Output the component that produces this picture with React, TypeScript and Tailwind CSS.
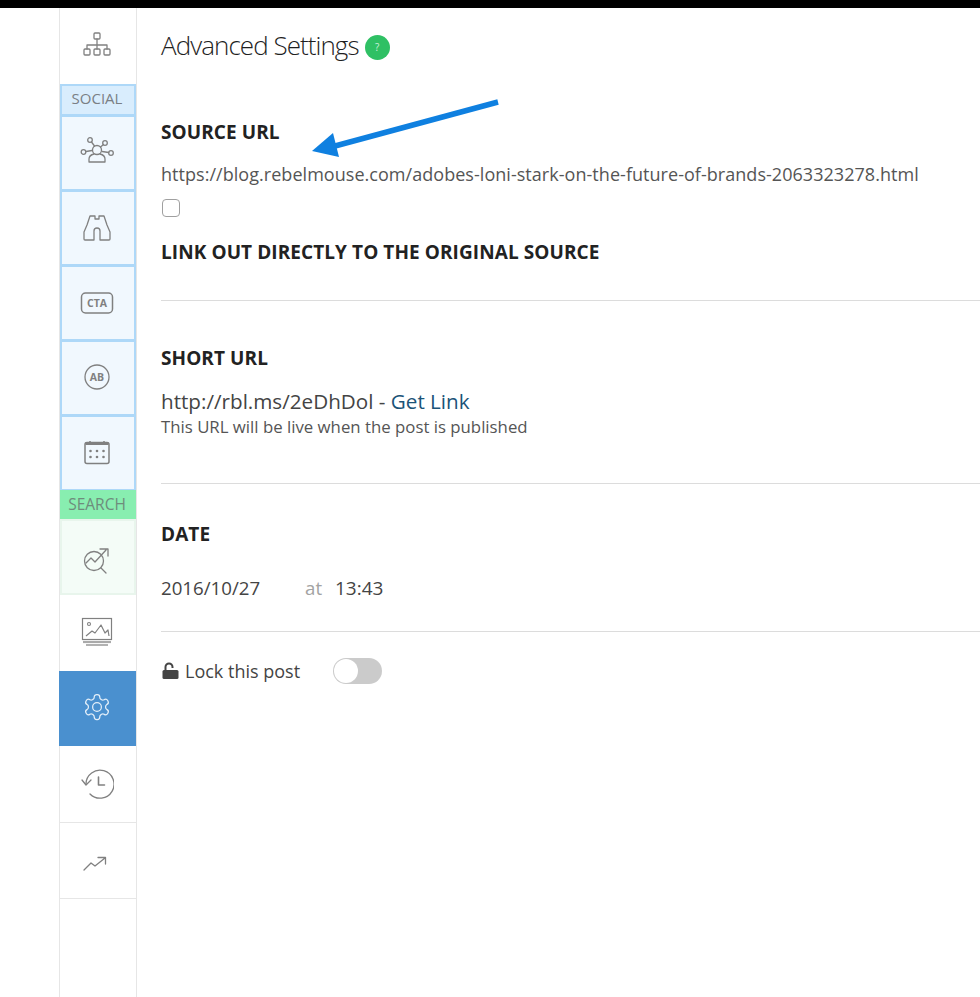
import type { ReactNode } from "react";

const stroke = "#808080";

function Ico({ children }: { children: ReactNode }) {
  return (
    <svg width="34" height="34" viewBox="0 0 34 34" fill="none" stroke={stroke} strokeWidth="1.3" strokeLinecap="round" strokeLinejoin="round">
      {children}
    </svg>
  );
}

function Cell({ className, children }: { className: string; children: ReactNode }) {
  return <div className={`flex items-center justify-center ${className}`}>{children}</div>;
}

const socialCell = "h-[76px] border-2 border-[#aed8f8] bg-[#f1f8fe] -mt-px";
const calendarDots = [7.5, 14, 20.5].flatMap((x) => [12, 18].map((y) => ({ x, y })));

export default function App() {
  return (
    <div className="flex h-[997px] w-[980px] flex-col overflow-hidden bg-white font-['Open_Sans',sans-serif] text-[#333]">
      <div className="h-2 shrink-0 bg-black" />
      <div className="relative flex flex-1 pl-[59px]">
        {/* left rail */}
        <div className="w-[78px] shrink-0 border-x border-[#e6e6e6]">
          <Cell className="h-[76px] pb-[3px] pr-[3px]">
            <Ico>
              <rect x="14" y="5" width="6" height="6" rx="1" />
              <path d="M17 11v6M7 21v-4h20v4M17 17v4" />
              <rect x="4" y="21" width="6" height="6" rx="1" />
              <rect x="14" y="21" width="6" height="6" rx="1" />
              <rect x="24" y="21" width="6" height="6" rx="1" />
            </Ico>
          </Cell>
          <div className="flex h-[32px] items-center justify-center border-2 border-[#aed8f8] bg-[#d9edfd] pb-[3px] pr-[2px] text-[15px] text-[#7a7f85]">
            SOCIAL
          </div>
          <Cell className={`${socialCell} pb-[4px] pr-[3px]`}>
            <Ico>
              <circle cx="17" cy="16" r="4.5" />
              <path d="M9 28v-3c0-3 3-4.500 5-5M25 28v-3c0-3-3-4.500-5-5M9 28h16" />
              <circle cx="10" cy="6" r="2.300" />
              <circle cx="25" cy="9" r="2.300" />
              <circle cx="3.500" cy="18" r="2.300" />
              <circle cx="31" cy="19" r="2.300" />
              <path d="M11.500 8l3 4M23.500 10.500l-3 2.500M6 17.500l6-1M28.700 18.500l-6.500-1" />
            </Ico>
          </Cell>
          <Cell className={`${socialCell} pr-[3px]`}>
            <Ico>
              <path d="M10 5h5v3h4V5h5l3 9 3 7v7a1 1 0 0 1-1 1h-9v-9c0-2-1-3-3-3s-3 1-3 3v9H5a1 1 0 0 1-1-1v-7l3-7z" />
            </Ico>
          </Cell>
          <Cell className={`${socialCell} pr-[3px]`}>
            <svg width="34" height="24" viewBox="0 0 34 24" fill="none">
              <rect x="1.500" y="2" width="31" height="20" rx="4" stroke={stroke} strokeWidth="1.500" />
              <text x="17" y="16" textAnchor="middle" fontFamily="Open Sans, sans-serif" fontWeight="700" fontSize="10.500" fill={stroke}>CTA</text>
            </svg>
          </Cell>
          <Cell className={`${socialCell} pb-[2px] pr-[3px]`}>
            <svg width="28" height="28" viewBox="0 0 28 28" fill="none">
              <circle cx="14" cy="14" r="12" stroke={stroke} strokeWidth="1.300" />
              <text x="14" y="18" textAnchor="middle" fontFamily="Open Sans, sans-serif" fontWeight="700" fontSize="10.500" fill={stroke}>AB</text>
            </svg>
          </Cell>
          <Cell className={`${socialCell} pb-[2px] pr-[3px]`}>
            <svg width="28" height="26" viewBox="0 0 28 26" fill="none" stroke={stroke}>
              <rect x="2" y="3.500" width="24" height="21" rx="2" strokeWidth="1.500" />
              <path d="M2.500 4.500h23" strokeWidth="3" />
              <path d="M7 2v3M21 2v3" strokeWidth="1.500" />
              {calendarDots.map((d) => (
                <circle key={`${d.x}-${d.y}`} cx={d.x} cy={d.y} r="1.300" fill={stroke} stroke="none" />
              ))}
            </svg>
          </Cell>
          <div className="-mt-px flex h-[29px] items-center justify-center bg-[#88eeb0] pr-[2px] text-[15.5px] text-[#6e8c7c]">SEARCH</div>
          <Cell className="h-[76px] border-2 border-[#e8f5ec] bg-[#f4fcf7] pt-[5px] pr-[3px]">
            <Ico>
              <circle cx="14" cy="18" r="9.500" />
              <path d="M6 20l5-5 4 4 11-12M20 6h8v7M21 25l5 5" />
            </Ico>
          </Cell>
          <Cell className="h-[76px] pb-[3px] pr-[3px]">
            <svg width="34" height="34" viewBox="0 0 34 34" fill="none" stroke={stroke}>
              <rect x="2.500" y="3.500" width="29" height="21" strokeWidth="1.200" />
              <circle cx="9" cy="9" r="1.500" strokeWidth="1.100" />
              <path d="M6 21l6-5 3 2 6-8 4 8 3-3 1 6" strokeWidth="1.200" strokeLinejoin="round" />
              <path d="M3 27h28" strokeWidth="2.200" stroke="#aaa" />
              <path d="M6 30h22" strokeWidth="1.800" stroke="#aaa" />
            </svg>
          </Cell>
          <Cell className="-ml-px h-[75px] bg-[#4a90cf] pb-[3px] pr-[2px]">
            <svg width="30" height="30" viewBox="0 0 24 24" fill="none" stroke="#e4eff9" strokeWidth="1" strokeLinecap="round" strokeLinejoin="round">
              <path d="M12.220 2h-.440a2 2 0 0 0-2 2v.180a2 2 0 0 1-1 1.730l-.430.250a2 2 0 0 1-2 0l-.150-.080a2 2 0 0 0-2.730.730l-.220.380a2 2 0 0 0 .730 2.730l.150.100a2 2 0 0 1 1 1.720v.510a2 2 0 0 1-1 1.740l-.150.090a2 2 0 0 0-.730 2.730l.220.380a2 2 0 0 0 2.730.730l.150-.080a2 2 0 0 1 2 0l.430.250a2 2 0 0 1 1 1.730V20a2 2 0 0 0 2 2h.440a2 2 0 0 0 2-2v-.180a2 2 0 0 1 1-1.730l.430-.250a2 2 0 0 1 2 0l.150.080a2 2 0 0 0 2.730-.730l.220-.390a2 2 0 0 0-.730-2.730l-.150-.080a2 2 0 0 1-1-1.740v-.500a2 2 0 0 1 1-1.740l.150-.090a2 2 0 0 0 .730-2.730l-.220-.380a2 2 0 0 0-2.730-.730l-.150.080a2 2 0 0 1-2 0l-.430-.250a2 2 0 0 1-1-1.730V4a2 2 0 0 0-2-2z" />
              <circle cx="12" cy="12" r="3.500" />
            </svg>
          </Cell>
          <Cell className="h-[77px] border-b border-[#e6e6e6] pr-[3px]">
            <Ico>
              <path d="M6 17a14 14 0 1 1 4 10" />
              <path d="M2 13l4 5 5-5" />
              <path d="M18.500 10v8h6" strokeWidth="1.600" />
            </Ico>
          </Cell>
          <Cell className="h-[76px] border-b border-[#e6e6e6] pt-[6px] pr-[6px]">
            <svg width="26" height="16" viewBox="0 0 26 16" fill="none" stroke={stroke} strokeWidth="1.300" strokeLinecap="round" strokeLinejoin="round">
              <path d="M2 14l7-7 4 3 10-8M16 1.500h7.500V8" />
            </svg>
          </Cell>
        </div>

        {/* settings */}
        <div className="min-w-0 flex-1 pl-6">
          <div className="mt-[18px] flex items-center">
            <h1 className="whitespace-nowrap text-[26px] leading-[38px] font-light tracking-[-0.95px] text-[#1f1f1f]">Advanced Settings</h1>
            <span className="ml-[6px] mt-1 flex h-[25px] w-[25px] items-center justify-center rounded-full bg-[#2fc064] text-[10px] text-[#cdeeda]">?</span>
          </div>

          <h2 className="mt-[56px] text-[19px] leading-6 font-bold tracking-[0.08px] text-[#222]">SOURCE URL</h2>
          <p className="mt-[18px] whitespace-nowrap text-[18px] leading-6 tracking-[0.04px] text-[#555]">
            https://blog.rebelmouse.com/adobes-loni-stark-on-the-future-of-brands-2063323278.html
          </p>
          <div className="mt-[13px] ml-px h-[18px] w-[18px] rounded-[4px] border border-[#a0a0a0] bg-white" />
          <h2 className="mt-[23px] whitespace-nowrap text-[19px] leading-6 font-bold tracking-[0.08px] text-[#222]">LINK OUT DIRECTLY TO THE ORIGINAL SOURCE</h2>

          <div className="mt-[36px] border-t border-[#dcdcdc] pt-[45px]">
            <h2 className="text-[19px] leading-6 font-bold tracking-[0.08px] text-[#222]">SHORT URL</h2>
            <p className="mt-[19px] text-[20.650px] leading-6 text-[#444]">
              http://rbl.ms/2eDhDol - <span className="text-[#1b5378]">Get Link</span>
            </p>
            <p className="mt-[4px] text-[16.800px] leading-5 text-[#555]">This URL will be live when the post is published</p>
          </div>

          <div className="mt-[46px] border-t border-[#dcdcdc] pt-[38px]">
            <h2 className="text-[19px] leading-6 font-bold tracking-[0.08px] text-[#222]">DATE</h2>
            <div className="mt-[30px] flex text-[18.700px] leading-6 text-[#444]">
              <span className="w-[144px]">2016/10/27</span>
              <span className="w-[30px] text-[#a3a3a3]">at</span>
              <span className="text-[19px]">13:43</span>
            </div>
          </div>

          <div className="mt-[31px] flex items-center border-t border-[#dcdcdc] pt-[26px]">
            <svg width="17" height="17" viewBox="0 0 17 17" className="-mt-[2px] ml-px">
              <path d="M3.500 8V5a3.500 3.500 0 0 1 7 0v1" fill="none" stroke="#444" strokeWidth="2" />
              <rect x="0.500" y="8" width="16" height="9" rx="1.500" fill="#444" />
            </svg>
            <span className="ml-[6px] text-[18px] leading-6 text-[#444]">Lock this post</span>
            <span className="ml-[33px] flex h-[26px] w-[49px] items-center rounded-full bg-[#cbcbcb] p-px">
              <span className="h-6 w-6 rounded-full bg-white" />
            </span>
          </div>
        </div>

        {/* annotation arrow */}
        <svg className="absolute left-[305px] top-[88px]" width="200" height="66" viewBox="0 0 200 66">
          <path d="M193 6L30 50" stroke="#0f80e0" strokeWidth="5.500" />
          <path d="M7 55L28 37L34 61Z" fill="#0f80e0" />
        </svg>
      </div>
    </div>
  );
}
